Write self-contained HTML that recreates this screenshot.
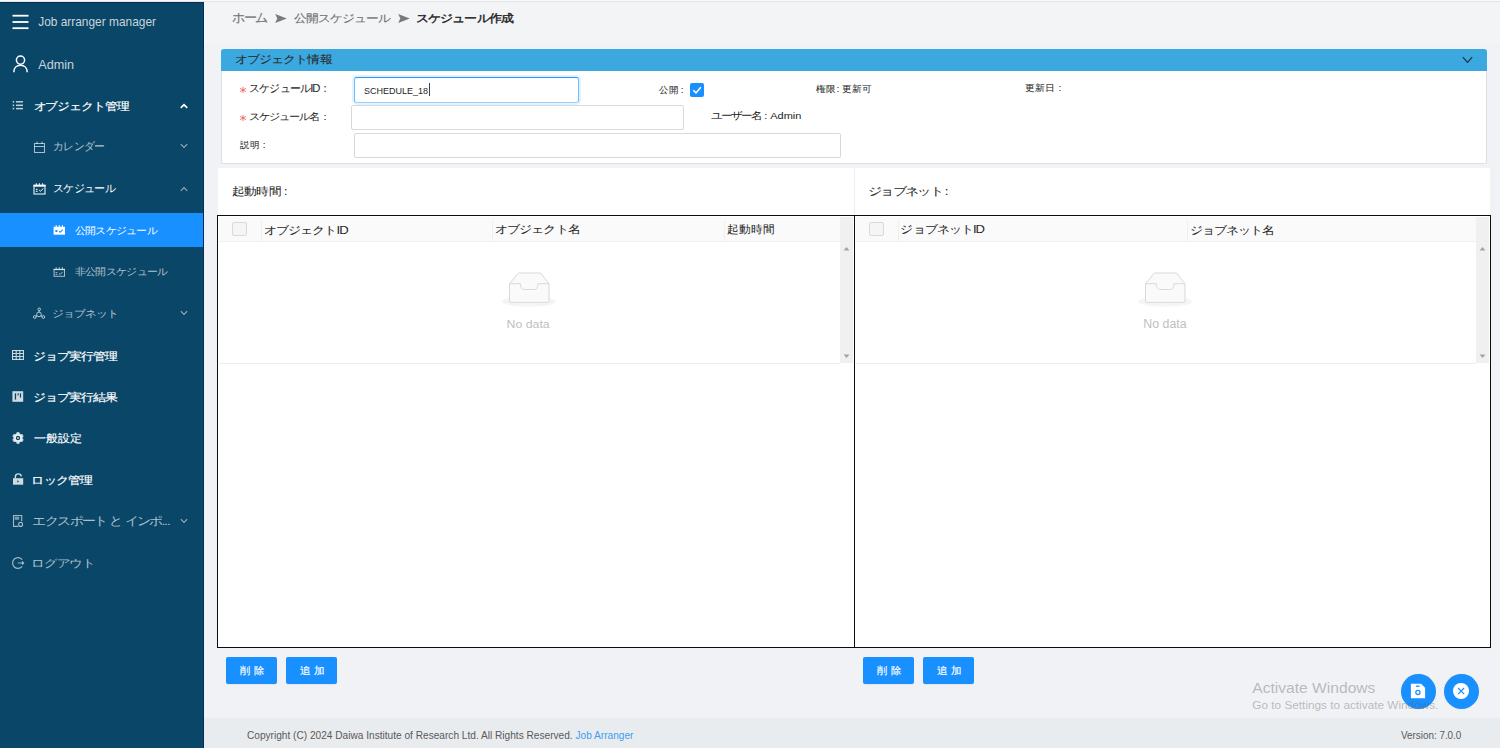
<!DOCTYPE html>
<html><head><meta charset="utf-8">
<style>
*{box-sizing:border-box;margin:0;padding:0}
html,body{width:1500px;height:748px;overflow:hidden}
body{font-family:"Liberation Sans",sans-serif;font-size:13px;color:#262626;background:#f0f2f5;position:relative}
.abs{position:absolute;white-space:nowrap}
#side{position:absolute;left:0;top:0;width:204px;height:748px;background:#0a4667}
.mi{position:absolute;left:0;width:204px;height:34px;line-height:34px;color:rgba(255,255,255,.68);font-size:13px}
.mi .t{position:absolute;white-space:nowrap}
.mi.b{color:#fff;font-weight:bold}
.chev{position:absolute;left:178px;top:0;width:10px;height:34px}
#main{position:absolute;left:204px;top:0;width:1296px;height:748px;background:#f0f2f5}
.inp{position:absolute;background:#fff;border:1px solid #d9d9d9;border-radius:2px}
.lbl{position:absolute;white-space:nowrap;font-size:11px;color:#262626}
.red{color:#f5222d}
.panel{position:absolute;background:#fff}
.tbl{position:absolute;border:1px solid #111;background:#fff}
.th{position:absolute;top:0;height:26px;background:#fafafa;border-bottom:1px solid #f0f0f0}
.btn{position:absolute;height:27px;width:51px;background:#1890ff;border-radius:2px;box-shadow:0 1px 1px rgba(0,0,0,.05)}
.bt{color:#fff;font-size:12px;line-height:18px;-webkit-text-stroke:0.2px #fff}
.abs{transform-origin:0 0}
</style></head><body>
<div id="side">
<svg class="abs" style="left:12px;top:14px" width="17" height="16" viewBox="0 0 17 16"><g fill="#fff"><rect x="0.5" y="0.8" width="16" height="1.8"/><rect x="0.5" y="7.1" width="16" height="1.8"/><rect x="0.5" y="13.3" width="16" height="1.8"/></g></svg>
<div class="abs" id="t_jam" style="left:38px;top:13px;font-size:13px;line-height:18px;color:rgba(255,255,255,.78)">Job arranger manager</div>
<svg class="abs" style="left:12px;top:55px" width="17" height="18" viewBox="0 0 17 18"><g fill="none" stroke="#fff" stroke-width="1.5"><circle cx="8.5" cy="5.1" r="4.1"/><path d="M1.8 17.3 C1.8 12.6 4.8 10.3 8.5 10.3 C12.2 10.3 15.2 12.6 15.2 17.3"/></g></svg>
<div class="abs" id="t_admin" style="left:38px;top:55px;font-size:13px;line-height:18px;color:rgba(255,255,255,.78)">Admin</div>

<!-- オブジェクト管理 -->
<svg class="abs" style="left:12px;top:100px" width="12" height="11" viewBox="0 0 12 11"><g fill="rgba(255,255,255,.75)"><rect x="0.7" y="1" width="1.5" height="1.6"/><rect x="0.7" y="4.5" width="1.5" height="1.6"/><rect x="0.7" y="7.8" width="1.5" height="1.6"/><rect x="4" y="1.05" width="7" height="1.5"/><rect x="4" y="4.55" width="7" height="1.5"/><rect x="4" y="7.85" width="7" height="1.5"/></g></svg>
<div class="abs" id="t_obj" style="letter-spacing:-1px;left:33px;top:96px;font-size:13px;line-height:18px;color:#fff;-webkit-text-stroke:0.2px #fff">オブジェクト管理</div>
<svg class="abs" style="left:180px;top:103px" width="8" height="6" viewBox="0 0 8 6"><path d="M0.8 4.9 L4 1.6 L7.2 4.9" fill="none" stroke="#fff" stroke-width="1.7"/></svg>

<!-- カレンダー -->
<svg class="abs" style="left:33px;top:141px" width="13" height="13" viewBox="0 0 13 13"><g fill="none" stroke="rgba(255,255,255,.65)" stroke-width="1"><rect x="1.5" y="2.5" width="10" height="9"/><path d="M1.5 5.5 H11.5 M4 0.6 V3 M9 0.6 V3"/></g></svg>
<div class="abs" id="t_cal" style="letter-spacing:-1px;left:54px;top:138px;font-size:13px;line-height:18px;color:rgba(255,255,255,.68)">カレンダー</div>
<svg class="abs" style="left:180px;top:143px" width="8" height="6" viewBox="0 0 8 6"><path d="M0.8 1.2 L4 4.4 L7.2 1.2" fill="none" stroke="rgba(255,255,255,.55)" stroke-width="1.2"/></svg>

<!-- スケジュール -->
<svg class="abs" style="left:33px;top:183px" width="13" height="12" viewBox="0 0 13 12"><g fill="none" stroke="#fff" stroke-width="1"><rect x="1" y="2.5" width="11" height="8.5"/><path d="M1 3 H12 M2.8 6.3 H4.6 M2.8 8.3 H4.6 M6.2 7 L7.5 8.3 L10.2 5.5"/></g><g fill="#fff"><rect x="0.5" y="1.6" width="12" height="1.8"/><rect x="2.8" y="0.3" width="1.1" height="1.5"/><rect x="5.9" y="0.3" width="1.1" height="1.5"/><rect x="9" y="0.3" width="1.1" height="1.5"/></g></svg>
<div class="abs" id="t_sch" style="letter-spacing:-1px;left:54px;top:180px;font-size:13px;line-height:18px;color:#fff">スケジュール</div>
<svg class="abs" style="left:180px;top:186px" width="8" height="6" viewBox="0 0 8 6"><path d="M0.8 4.9 L4 1.7 L7.2 4.9" fill="none" stroke="rgba(255,255,255,.55)" stroke-width="1.2"/></svg>

<!-- active -->
<div class="abs" style="left:0;top:213px;width:204px;height:34px;background:#1890ff"></div>
<svg class="abs" style="left:53px;top:225px" width="13" height="11" viewBox="0 0 13 11"><g fill="#fff"><rect x="0.6" y="1.8" width="11.4" height="7.9"/><rect x="2.6" y="0.3" width="1.2" height="1.8"/><rect x="5.7" y="0.3" width="1.2" height="1.8"/><rect x="8.8" y="0.3" width="1.2" height="1.8"/></g><rect x="2.4" y="5" width="2" height="2" fill="#1890ff"/><path d="M6 6.2 L7.2 7.3 L9.7 4.6" fill="none" stroke="#1890ff" stroke-width="1.1"/></svg>
<div class="abs" id="t_pub" style="letter-spacing:-1px;left:75px;top:221px;font-size:12px;line-height:18px;color:#fff">公開スケジュール</div>

<!-- 非公開 -->
<svg class="abs" style="left:53px;top:267px" width="13" height="11" viewBox="0 0 13 11"><g fill="none" stroke="rgba(255,255,255,.65)" stroke-width="1"><rect x="1.1" y="2.4" width="10.4" height="6.9"/><path d="M2.6 5.6 H4.3 M2.6 7.3 H4.3 M6 6.3 L7.2 7.4 L9.7 4.8"/></g><g fill="rgba(255,255,255,.65)"><rect x="0.6" y="1.9" width="11.4" height="1.2"/><rect x="2.6" y="0.3" width="1.2" height="1.6"/><rect x="5.7" y="0.3" width="1.2" height="1.6"/><rect x="8.8" y="0.3" width="1.2" height="1.6"/></g></svg>
<div class="abs" id="t_npub" style="letter-spacing:-1px;left:75px;top:262px;font-size:12px;line-height:18px;color:rgba(255,255,255,.68)">非公開スケジュール</div>

<!-- ジョブネット -->
<svg class="abs" style="left:33px;top:307px" width="13" height="13" viewBox="0 0 13 13"><g fill="none" stroke="rgba(255,255,255,.68)" stroke-width="1"><circle cx="6" cy="7.4" r="2.3"/><circle cx="6.2" cy="2.3" r="1.3"/><circle cx="1.8" cy="10" r="1.4"/><circle cx="10.3" cy="10" r="1.4"/><path d="M6.1 3.6 V5.1 M3 9.3 L4 8.7 M9.1 9.3 L8 8.7"/></g></svg>
<div class="abs" id="t_jn" style="letter-spacing:-1px;left:54px;top:304px;font-size:12px;line-height:18px;color:rgba(255,255,255,.68)">ジョブネット</div>
<svg class="abs" style="left:180px;top:310px" width="8" height="6" viewBox="0 0 8 6"><path d="M0.8 1.2 L4 4.4 L7.2 1.2" fill="none" stroke="rgba(255,255,255,.55)" stroke-width="1.2"/></svg>

<!-- ジョブ実行管理 -->
<svg class="abs" style="left:12px;top:350px" width="12" height="10" viewBox="0 0 12 10"><g fill="none" stroke="rgba(255,255,255,.78)" stroke-width="1.1"><rect x="0.55" y="0.55" width="10.9" height="8.9"/><path d="M0.5 3.5 H11.5 M0.5 6.5 H11.5 M4.2 0.5 V9.5 M7.8 0.5 V9.5"/></g></svg>
<div class="abs" id="t_jem" style="letter-spacing:-1px;left:33px;top:346px;font-size:13px;line-height:18px;color:#fff;-webkit-text-stroke:0.2px #fff">ジョブ実行管理</div>

<!-- ジョブ実行結果 -->
<svg class="abs" style="left:12px;top:391px" width="12" height="11" viewBox="0 0 12 11"><rect x="0.4" y="0.2" width="10.8" height="10.6" fill="rgba(255,255,255,.8)"/><g fill="#0a4667"><rect x="2.8" y="2.3" width="1.3" height="6.3"/><rect x="5.6" y="2.3" width="1.1" height="2.2"/><rect x="7.9" y="2.3" width="1.2" height="4.3"/></g></svg>
<div class="abs" id="t_jer" style="letter-spacing:-1px;left:33px;top:388px;font-size:13px;line-height:18px;color:#fff;-webkit-text-stroke:0.2px #fff">ジョブ実行結果</div>

<!-- 一般設定 -->
<svg class="abs" style="left:12px;top:432px" width="12" height="12" viewBox="0 0 12 12"><g fill="rgba(255,255,255,.7)"><circle cx="6" cy="6" r="4.7"/><rect x="4.4" y="0.1" width="3.2" height="11.8" rx="0.9"/><rect x="4.4" y="0.1" width="3.2" height="11.8" rx="0.9" transform="rotate(60 6 6)"/><rect x="4.4" y="0.1" width="3.2" height="11.8" rx="0.9" transform="rotate(-60 6 6)"/></g><circle cx="6" cy="6" r="2.2" fill="#0a4667"/><circle cx="6" cy="6" r="1.1" fill="rgba(255,255,255,.7)"/></svg>
<div class="abs" id="t_gen" style="left:33px;top:429px;font-size:13px;line-height:18px;color:#fff;-webkit-text-stroke:0.2px #fff">一般設定</div>

<!-- ロック管理 -->
<svg class="abs" style="left:12px;top:473px" width="12" height="12" viewBox="0 0 12 12"><path d="M3.4 5.5 V3.6 C3.4 1.9 4.6 0.9 6.3 0.9 C8 0.9 9.2 1.9 9.2 3.4" fill="none" stroke="rgba(255,255,255,.8)" stroke-width="1.4"/><rect x="1" y="5.2" width="10.2" height="6.5" fill="rgba(255,255,255,.8)"/><path d="M5.4 7.3 L7.2 8.4 L5.4 9.6Z" fill="#0a4667"/></svg>
<div class="abs" id="t_lock" style="letter-spacing:-1px;left:33px;top:471px;font-size:13px;line-height:18px;color:#fff;-webkit-text-stroke:0.2px #fff">ロック管理</div>

<!-- エクスポート -->
<svg class="abs" style="left:12px;top:514px" width="12" height="14" viewBox="0 0 12 14"><g fill="none" stroke="rgba(255,255,255,.62)" stroke-width="1.1"><path d="M6.3 12.4 H1.5 V1.5 H9.7 V7.2"/><circle cx="8.6" cy="10.4" r="2"/></g><rect x="2.6" y="2.6" width="4.6" height="3.2" fill="rgba(255,255,255,.45)"/></svg>
<div class="abs" id="t_exp" style="letter-spacing:-1px;left:33px;top:512px;font-size:13px;line-height:18px;color:rgba(255,255,255,.68)">エクスポート と インポ...</div>
<svg class="abs" style="left:180px;top:518px" width="8" height="6" viewBox="0 0 8 6"><path d="M0.8 1.2 L4 4.4 L7.2 1.2" fill="none" stroke="rgba(255,255,255,.55)" stroke-width="1.2"/></svg>

<!-- ログアウト -->
<svg class="abs" style="left:11px;top:556px" width="14" height="14" viewBox="0 0 14 14"><g fill="none" stroke="rgba(255,255,255,.62)" stroke-width="1.2"><path d="M11.2 3.6 A5.4 5.4 0 1 0 11.2 10.4"/><path d="M6.8 7 H12.6 M11 5.5 L12.6 7 L11 8.5"/></g></svg>
<div class="abs" id="t_out" style="letter-spacing:-1px;left:33px;top:554px;font-size:13px;line-height:18px;color:rgba(255,255,255,.68)">ログアウト</div>
</div>
<div id="main"></div>
<div class="abs" style="left:204px;top:2px;width:1296px;height:43px;background:#f3f4f6"></div>
<div style="position:absolute;left:0;top:0;width:1500px;height:1px;background:#f9f9f9"></div><div style="position:absolute;left:0;top:1px;width:1500px;height:1px;background:#e2e4e3"></div><div style="position:absolute;left:203px;top:2px;width:1px;height:746px;background:#032e58"></div><div style="position:absolute;left:0;top:2px;width:203px;height:1px;background:#052f58"></div>
<!-- breadcrumb -->
<div class="abs" id="t_bc1" style="letter-spacing:-1px;left:231px;top:10px;font-size:13px;line-height:18px;color:#737373;-webkit-text-stroke:0.15px #737373">ホーム</div>
<svg class="abs" style="left:275px;top:14px" width="12" height="9" viewBox="0 0 12 9"><path d="M0.2 0.1 L11.8 4.4 L0.2 8.9 L2.3 4.4 Z" fill="#7a7a7a"/></svg>
<div class="abs" id="t_bc2" style="letter-spacing:-1px;left:293px;top:10px;font-size:13px;line-height:18px;color:#737373;-webkit-text-stroke:0.15px #737373">公開スケジュール</div>
<svg class="abs" style="left:398px;top:14px" width="12" height="9" viewBox="0 0 12 9"><path d="M0.2 0.1 L11.8 4.4 L0.2 8.9 L2.3 4.4 Z" fill="#7a7a7a"/></svg>
<div class="abs" id="t_bc3" style="letter-spacing:-1px;left:417px;top:10px;font-size:13px;line-height:18px;color:#1f1f1f;-webkit-text-stroke:0.45px #1f1f1f">スケジュール作成</div>

<!-- object info panel -->
<div class="abs" style="left:221px;top:49px;width:1266px;height:115px;background:#fff;border:1px solid #dcdfe3;border-top:none;border-radius:2px"></div>
<div class="abs" style="left:221px;top:49px;width:1266px;height:22px;background:#3ba8e0;border-radius:3px 3px 0 0"></div>
<div class="abs" id="t_oi" style="letter-spacing:-1px;left:235px;top:50px;font-size:13px;line-height:18px;color:#2b2b2b;-webkit-text-stroke:0.1px #2b2b2b">オブジェクト情報</div>
<svg class="abs" style="left:1462px;top:56px" width="11" height="8" viewBox="0 0 11 8"><path d="M0.8 1.2 L5.5 6.4 L10.2 1.2" fill="none" stroke="#1e2a33" stroke-width="1.05"/></svg>

<svg class="abs" style="left:239px;top:86px" width="8" height="8" viewBox="0 0 8 8"><path d="M4 0.9 V7.1 M1.1 2.4 L6.9 5.6 M6.9 2.4 L1.1 5.6" stroke="#f25a50" stroke-width="0.85"/></svg>
<div class="abs" id="t_l1" style="letter-spacing:-1px;left:250px;top:82px;font-size:11px;line-height:16px;color:#262626;-webkit-text-stroke:0.05px #262626">スケジュールID<span style="margin-left:4px">:</span></div>
<div class="inp" style="left:354px;top:77px;width:225px;height:25.5px;border:1px solid #6dbbff;border-top-color:#2b95ff;border-bottom:1.5px solid #9ad2ff;border-radius:3px;box-shadow:0 0 0 2px rgba(24,144,255,.12)"></div>
<div class="abs" id="t_sid" style="left:364px;top:82px;font-size:10px;line-height:16px;color:#262626">SCHEDULE_18</div>
<div class="abs" style="left:429px;top:83px;width:1px;height:13px;background:#444"></div>
<div class="abs" id="t_pubcb" style="left:659px;top:82px;font-size:11px;line-height:16px;color:#262626;-webkit-text-stroke:0.05px #262626">公開<span style="margin-left:2px">:</span></div>
<div class="abs" style="left:690px;top:83px;width:14px;height:14px;background:#1890ff;border-radius:2px"></div>
<svg class="abs" style="left:690px;top:83px" width="14" height="14" viewBox="0 0 14 14"><path d="M3.3 7.2 L6 9.9 L10.8 4.3" fill="none" stroke="#fff" stroke-width="1.6"/></svg>
<div class="abs" id="t_perm" style="left:816px;top:80px;font-size:11px;line-height:16px;color:#262626;-webkit-text-stroke:0.05px #262626">権限: 更新可</div>
<div class="abs" id="t_upd" style="left:1025px;top:80px;font-size:11px;line-height:16px;color:#262626;-webkit-text-stroke:0.05px #262626">更新日 :</div>

<svg class="abs" style="left:239px;top:114px" width="8" height="8" viewBox="0 0 8 8"><path d="M4 0.9 V7.1 M1.1 2.4 L6.9 5.6 M6.9 2.4 L1.1 5.6" stroke="#f25a50" stroke-width="0.85"/></svg>
<div class="abs" id="t_l2" style="letter-spacing:-1px;left:250px;top:110px;font-size:11px;line-height:16px;color:#262626;-webkit-text-stroke:0.05px #262626">スケジュール名<span style="margin-left:4px">:</span></div>
<div class="inp" style="left:351px;top:105px;width:333px;height:25px"></div>
<div class="abs" id="t_user" style="left:711px;top:108px;font-size:11px;line-height:16px;color:#262626;-webkit-text-stroke:0.05px #262626"><span style="letter-spacing:-1px">ユーザー名</span> : Admin</div>

<div class="abs" id="t_l3" style="left:240px;top:137px;font-size:11px;line-height:16px;color:#262626;-webkit-text-stroke:0.05px #262626">説明 :</div>
<div class="inp" style="left:354px;top:133px;width:487px;height:25px"></div>

<!-- lower panels -->
<div class="panel" style="left:218px;top:168px;width:1272px;height:480px"></div>
<div class="abs" style="left:854px;top:168px;width:1px;height:48px;background:#eeeeee"></div>
<div class="abs" id="t_st" style="left:232px;top:183px;font-size:12px;line-height:18px;color:#262626;-webkit-text-stroke:0.05px #262626">起動時間 :</div>
<div class="abs" id="t_jnl" style="letter-spacing:-1px;left:869px;top:183px;font-size:12px;line-height:18px;color:#262626;-webkit-text-stroke:0.05px #262626">ジョブネット :</div>

<!-- left table -->
<div class="abs" style="left:217px;top:215px;width:638px;height:433px;border:1.5px solid #0d0d0d;border-right:1px solid #0d0d0d"></div>
<div class="abs" style="left:219px;top:217px;width:621px;height:25px;background:#fafafa;border-bottom:1px solid #f0f0f0"></div>
<div class="abs" style="left:232px;top:222px;width:15px;height:14px;background:#f5f5f5;border:1px solid #d9d9d9;border-radius:2px"></div>
<div class="abs" style="left:261px;top:220px;width:1px;height:21px;background:#efefef"></div>
<div class="abs" style="left:492px;top:220px;width:1px;height:21px;background:#efefef"></div>
<div class="abs" style="left:724px;top:220px;width:1px;height:21px;background:#efefef"></div>
<div class="abs" id="t_h1" style="letter-spacing:-1px;left:264px;top:220px;font-size:13px;line-height:18px;color:#262626;-webkit-text-stroke:0.05px #262626">オブジェクトID</div>
<div class="abs" id="t_h2" style="letter-spacing:-1px;left:496px;top:220px;font-size:13px;line-height:18px;color:#262626;-webkit-text-stroke:0.05px #262626">オブジェクト名</div>
<div class="abs" id="t_h3" style="left:727px;top:220px;font-size:13px;line-height:18px;color:#262626;-webkit-text-stroke:0.05px #262626">起動時間</div>
<div class="abs" style="left:840px;top:217px;width:13px;height:146px;background:#f0f0f0"></div>
<svg class="abs" style="left:843px;top:246px" width="7" height="5" viewBox="0 0 7 5"><path d="M0.5 4.5 L3.5 1 L6.5 4.5Z" fill="#a3a3a3"/></svg>
<svg class="abs" style="left:843px;top:354px" width="7" height="5" viewBox="0 0 7 5"><path d="M0.5 0.5 L3.5 4 L6.5 0.5Z" fill="#a3a3a3"/></svg>
<div class="abs" style="left:219px;top:363px;width:621px;height:1px;background:#ececec"></div>

<!-- right table -->
<div class="abs" style="left:854px;top:215px;width:637px;height:433px;border:1.5px solid #0d0d0d"></div>
<div class="abs" style="left:856px;top:217px;width:620px;height:25px;background:#fafafa;border-bottom:1px solid #f0f0f0"></div>
<div class="abs" style="left:869px;top:222px;width:15px;height:14px;background:#f5f5f5;border:1px solid #d9d9d9;border-radius:2px"></div>
<div class="abs" style="left:898px;top:220px;width:1px;height:21px;background:#efefef"></div>
<div class="abs" style="left:1187px;top:220px;width:1px;height:21px;background:#efefef"></div>
<div class="abs" id="t_h4" style="letter-spacing:-1px;left:901px;top:220px;font-size:13px;line-height:18px;color:#262626;-webkit-text-stroke:0.05px #262626">ジョブネットID</div>
<div class="abs" id="t_h5" style="letter-spacing:-1px;left:1190px;top:220px;font-size:13px;line-height:18px;color:#262626;-webkit-text-stroke:0.05px #262626">ジョブネット名</div>
<div class="abs" style="left:1476px;top:217px;width:13px;height:146px;background:#f0f0f0"></div>
<svg class="abs" style="left:1479px;top:246px" width="7" height="5" viewBox="0 0 7 5"><path d="M0.5 4.5 L3.5 1 L6.5 4.5Z" fill="#a3a3a3"/></svg>
<svg class="abs" style="left:1479px;top:354px" width="7" height="5" viewBox="0 0 7 5"><path d="M0.5 0.5 L3.5 4 L6.5 0.5Z" fill="#a3a3a3"/></svg>
<div class="abs" style="left:856px;top:363px;width:620px;height:1px;background:#ececec"></div>

<!-- empty icons -->
<svg class="abs" style="left:502px;top:271px" width="56" height="38" viewBox="0 0 56 38"><ellipse cx="27" cy="30.5" rx="27" ry="5.2" fill="#f5f5f5"/><path d="M7.5 12.7 L16 2.5 Q16.5 2 17.5 2 H37.5 Q38.5 2 39 2.5 L47 12.7 V30 Q47 31.4 45.6 31.4 H8.9 Q7.5 31.4 7.5 30 Z" fill="#fafafa" stroke="#d9d9d9" stroke-width="1"/><path d="M7.5 12.7 H18.3 C18.6 16.8 19.6 18.5 21.8 18.5 H32.6 C34.8 18.5 35.8 16.8 36 12.7 H47" fill="#fafafa" stroke="#d9d9d9" stroke-width="1"/></svg>
<div class="abs" id="t_nd1" style="left:507px;top:315px;font-size:12px;line-height:16px;color:#bfbfbf">No data</div>
<svg class="abs" style="left:1138px;top:271px" width="56" height="38" viewBox="0 0 56 38"><ellipse cx="27" cy="30.5" rx="27" ry="5.2" fill="#f5f5f5"/><path d="M7.5 12.7 L16 2.5 Q16.5 2 17.5 2 H37.5 Q38.5 2 39 2.5 L47 12.7 V30 Q47 31.4 45.6 31.4 H8.9 Q7.5 31.4 7.5 30 Z" fill="#fafafa" stroke="#d9d9d9" stroke-width="1"/><path d="M7.5 12.7 H18.3 C18.6 16.8 19.6 18.5 21.8 18.5 H32.6 C34.8 18.5 35.8 16.8 36 12.7 H47" fill="#fafafa" stroke="#d9d9d9" stroke-width="1"/></svg>
<div class="abs" id="t_nd2" style="left:1144px;top:315px;font-size:12px;line-height:16px;color:#bfbfbf">No data</div>

<!-- buttons -->
<div class="btn" style="left:226px;top:657px"></div><div class="abs bt" id="t_b1" style="left:240px;top:662px">削 除</div>
<div class="btn" style="left:286px;top:657px"></div><div class="abs bt" id="t_b2" style="left:300px;top:662px">追 加</div>
<div class="btn" style="left:863px;top:657px"></div><div class="abs bt" id="t_b3" style="left:877px;top:662px">削 除</div>
<div class="btn" style="left:923px;top:657px"></div><div class="abs bt" id="t_b4" style="left:937px;top:662px">追 加</div>

<!-- FABs -->
<div class="abs" style="left:1400.5px;top:673.5px;width:35px;height:35px;border-radius:50%;background:#1890ff;box-shadow:0 0 1px rgba(240,200,150,.6)"></div>
<svg class="abs" style="left:1410px;top:683px" width="16" height="16" viewBox="0 0 16 16"><path d="M0.9 0.7 H11 L15.1 4.8 V15.3 H0.9 Z" fill="#fff"/><rect x="5.9" y="2.6" width="3.6" height="1.3" fill="#1890ff"/><circle cx="7.9" cy="9.5" r="2.1" fill="none" stroke="#1890ff" stroke-width="1.3"/></svg>
<div class="abs" style="left:1444px;top:673.5px;width:35px;height:35px;border-radius:50%;background:#1890ff;box-shadow:0 0 1px rgba(240,200,150,.6)"></div>
<div class="abs" style="left:1453.1px;top:683.3px;width:15.8px;height:15.8px;border-radius:50%;background:#fff"></div>
<svg class="abs" style="left:1453px;top:683px" width="16" height="16" viewBox="0 0 16 16"><path d="M5.1 5 L11.1 11.1 M11.1 5 L5.1 11.1" stroke="#1890ff" stroke-width="1.2"/></svg>

<!-- watermark -->
<div class="abs" id="t_aw" style="left:1251px;top:677px;font-size:15px;line-height:20px;color:rgba(95,95,95,.4)">Activate Windows</div>
<div class="abs" id="t_gts" style="left:1251px;top:697px;font-size:12px;line-height:16px;color:rgba(95,95,95,.4)">Go to Settings to activate Windows.</div>

<!-- footer -->
<div class="abs" style="left:204px;top:718px;width:1296px;height:30px;background:#e9ecef"></div>
<div class="abs" id="t_copy" style="left:247px;top:727px;font-size:11px;line-height:16px;color:#595959">Copyright (C) 2024 Daiwa Institute of Research Ltd. All Rights Reserved. <span style="color:#3d9ef2">Job Arranger</span></div>
<div class="abs" id="t_ver" style="left:1401px;top:727px;font-size:11px;line-height:16px;color:#595959">Version: 7.0.0</div>
<style id="fit">
#t_jam{transform:matrix(0.9155,0,0,0.9167,0.20,1.13)}
#t_admin{transform:matrix(0.9722,0,0,0.9778,0.20,1.09)}
#t_obj{transform:matrix(0.9928,0,0,0.8600,0.50,2.39)}
#t_cal{transform:matrix(0.8610,0,0,0.8750,-0.86,0.88)}
#t_sch{transform:matrix(0.8611,0,0,0.8600,-0.86,0.93)}
#t_pub{transform:matrix(0.9348,0,0,0.8600,-0.20,1.81)}
#t_npub{transform:matrix(0.9350,0,0,0.8600,-0.20,2.11)}
#t_jn{transform:matrix(1.0081,0,0,0.8600,-2.12,1.46)}
#t_jem{transform:matrix(1.0036,0,0,0.8600,-0.30,2.39)}
#t_jer{transform:matrix(1.0036,0,0,0.8600,-0.30,2.19)}
#t_gen{transform:matrix(0.9314,0,0,0.8600,0.50,2.09)}
#t_lock{transform:matrix(1.0102,0,0,0.8600,-1.52,1.64)}
#t_exp{transform:matrix(1.0318,0,0,0.8917,-0.53,1.62)}
#t_out{transform:matrix(1.0571,0,0,0.8600,-1.61,1.71)}
#t_bc1{transform:matrix(0.9722,0,0,0.9636,1.00,-0.85)}
#t_bc2{transform:matrix(0.9959,0,0,0.8600,1.00,1.19)}
#t_bc3{transform:matrix(1.0103,0,0,0.8600,-1.00,1.19)}
#t_oi{transform:matrix(1.0063,0,0,0.8600,-0.01,1.89)}
#t_l1{transform:matrix(1.0200,0,0,1.0300,-1.02,-1.92)}
#t_sid{transform:matrix(0.9014,0,0,0.9600,0.00,1.32)}
#t_pubcb{transform:matrix(0.8963,0,0,0.8600,0.20,0.99)}
#t_perm{transform:matrix(0.9180,0,0,0.8600,0.40,1.19)}
#t_upd{transform:matrix(0.9333,0,0,0.8600,-0.10,1.14)}
#t_l2{transform:matrix(1.0066,0,0,0.9000,-1.01,-0.70)}
#t_user{transform:matrix(0.9967,0,0,0.8636,0.30,0.91)}
#t_l3{transform:matrix(0.9036,0,0,0.8600,0.00,0.59)}
#t_st{transform:matrix(1.0056,0,0,0.8750,0.30,0.88)}
#t_jnl{transform:matrix(1.1200,0,0,0.8750,-0.82,0.88)}
#t_h1{transform:matrix(1.0084,0,0,0.8600,-0.01,2.39)}
#t_h2{transform:matrix(1.0157,0,0,0.8600,-1.32,2.04)}
#t_h3{transform:matrix(0.9115,0,0,0.8600,0.00,2.19)}
#t_h4{transform:matrix(1.0060,0,0,0.8600,-0.51,2.14)}
#t_h5{transform:matrix(1.0096,0,0,0.8600,-0.31,2.34)}
#t_nd1{transform:matrix(1.0268,0,0,0.9444,-0.43,1.17)}
#t_nd2{transform:matrix(1.0268,0,0,0.9889,-0.63,1.33)}
#t_b1{transform:matrix(0.8796,0,0,0.8600,0.25,0.46)}
#t_b2{transform:matrix(0.9038,0,0,0.8600,-0.20,0.46)}
#t_b3{transform:matrix(0.8796,0,0,0.8600,0.25,0.46)}
#t_b4{transform:matrix(0.9038,0,0,0.8600,-0.20,0.46)}
#t_aw{transform:matrix(1.0398,0,0,0.9909,1.30,1.04)}
#t_gts{transform:matrix(0.9824,0,0,0.8600,1.30,1.41)}
#t_copy{transform:matrix(0.9200,0,0,0.9700,0.00,0.12)}
#t_ver{transform:matrix(0.8970,0,0,0.9750,0.00,-0.00)}
</style>
</body></html>
